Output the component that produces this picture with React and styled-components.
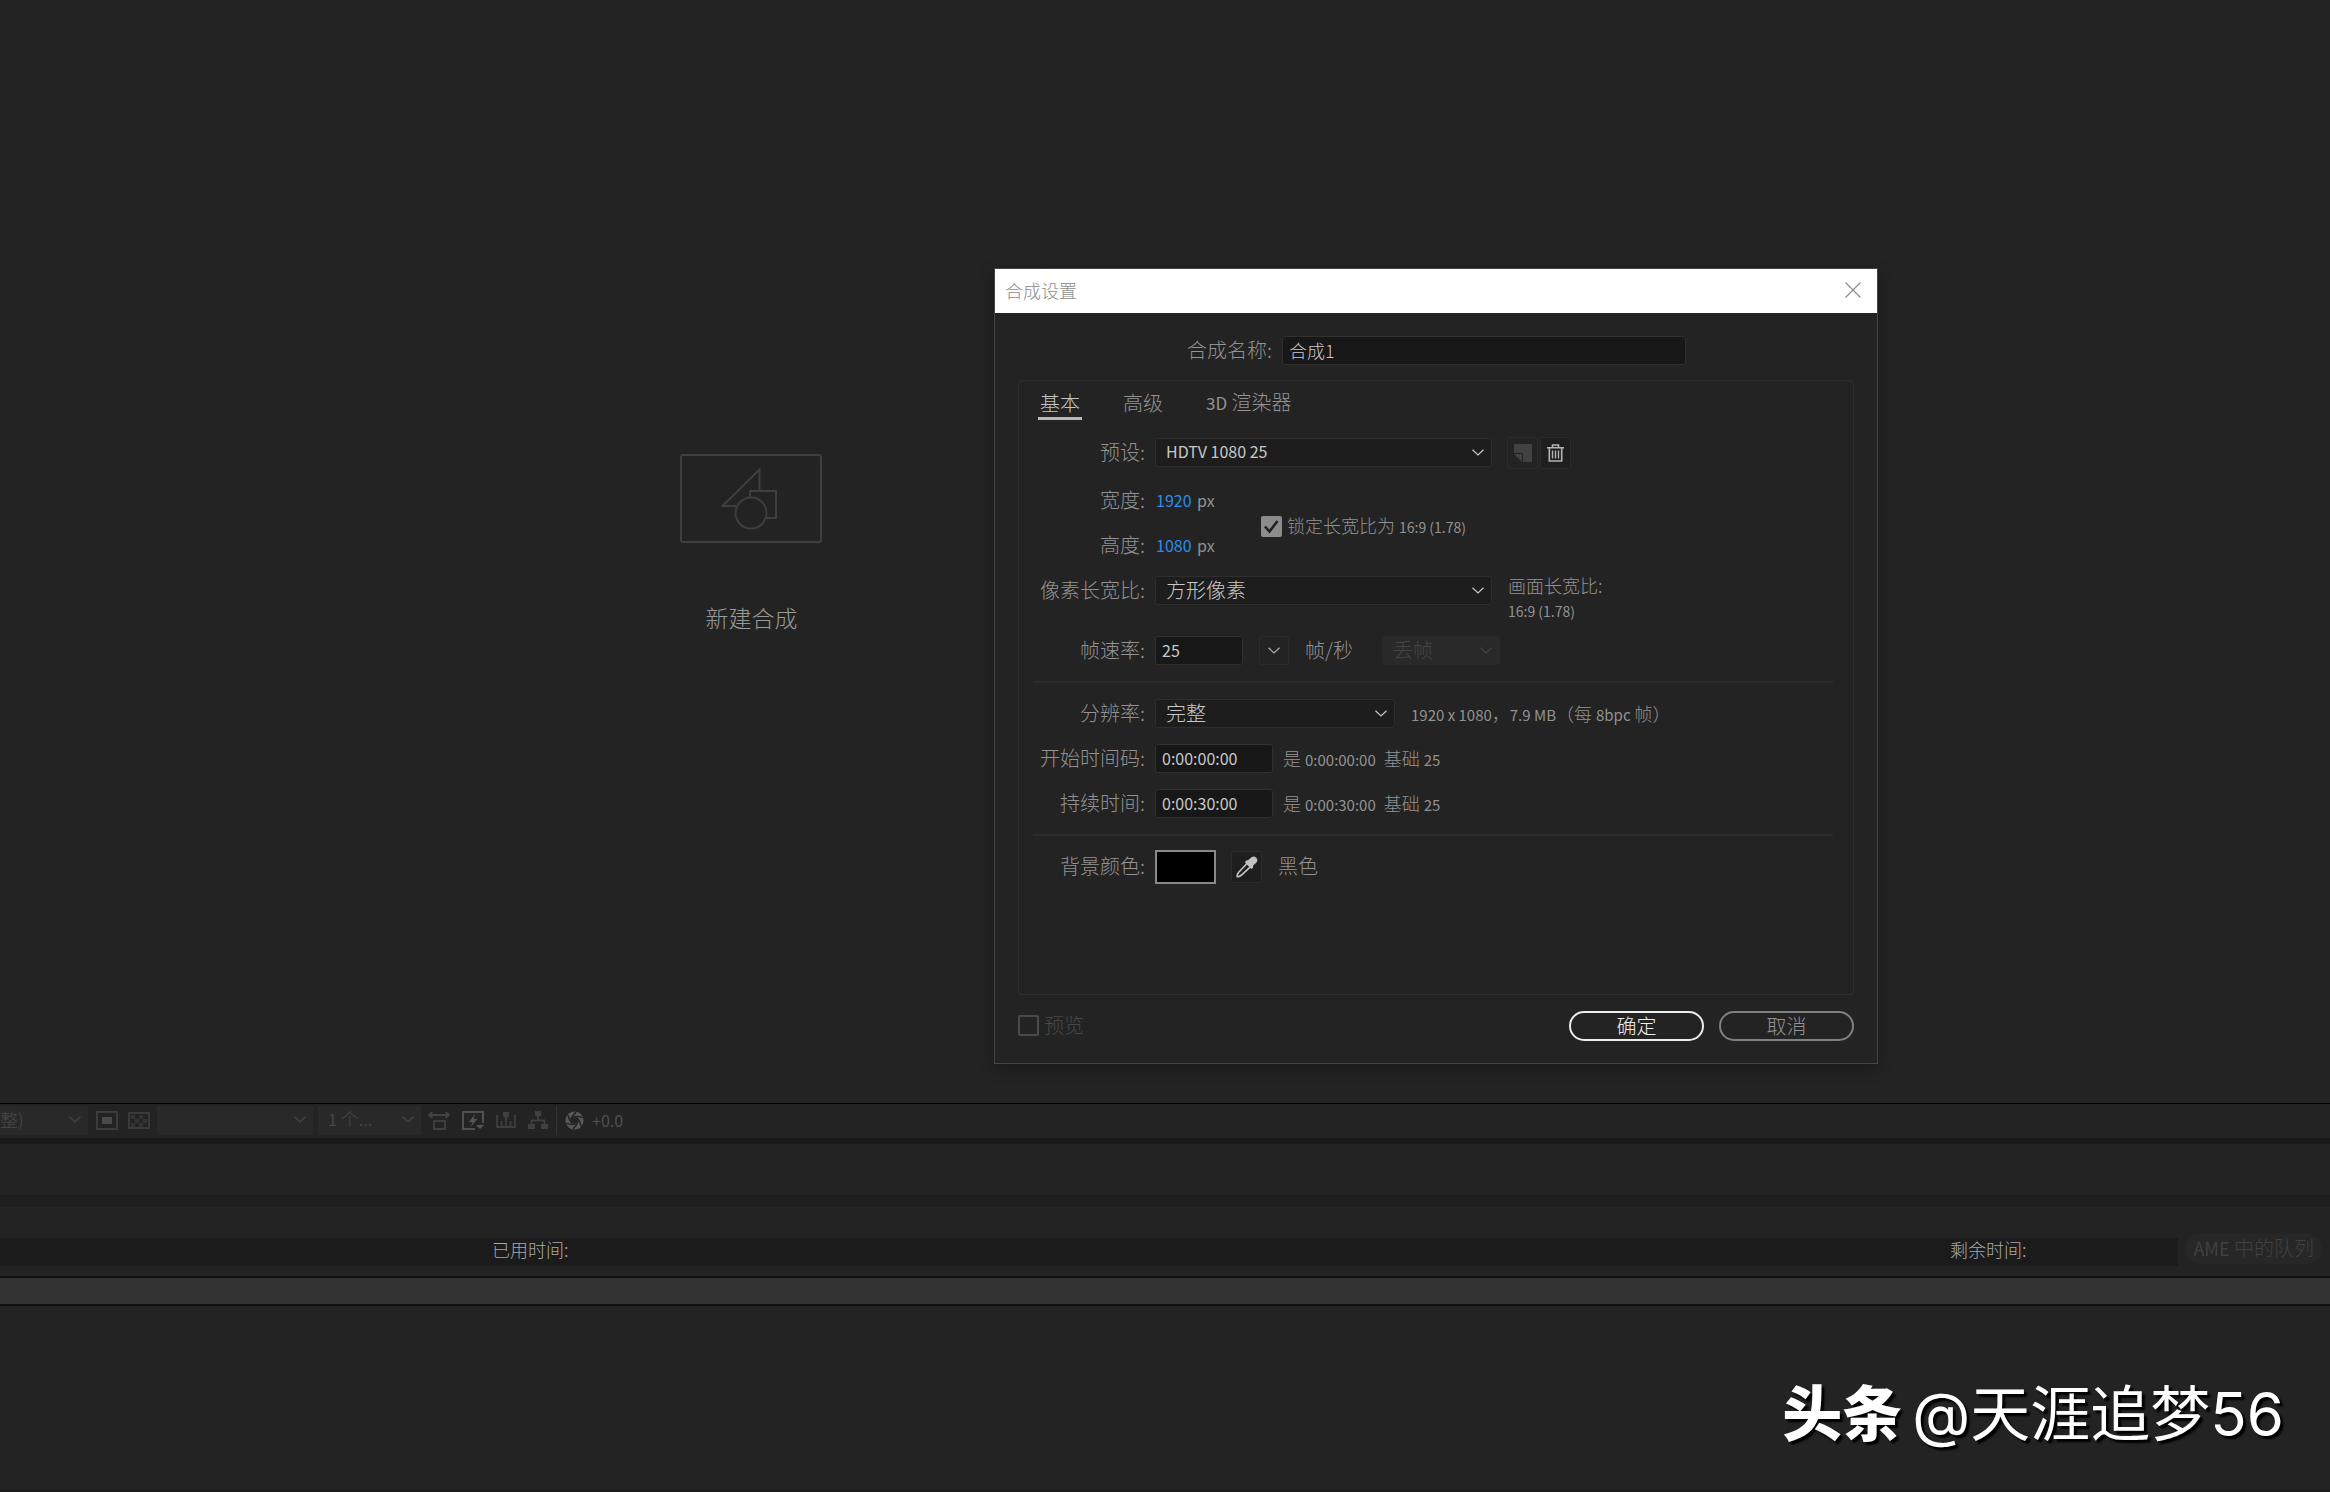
import React, { useState } from 'react';
import styled, { createGlobalStyle } from 'styled-components';

const Chevron = () => (
    <svg width="12" height="7" viewBox="0 0 12 7" fill="none" stroke="currentColor" strokeWidth="1.200">
        <path d="M.5 .8L6 6L11.500 .8" />
    </svg>
);

const ShapesIcon = () => (
    <svg width="56" height="62" viewBox="0 0 56 62" fill="none" stroke="#3f3f3f" strokeWidth="2">
        <path d="M15 38H1.500L38.500 1.500V23" />
        <path d="M29 29V23H55V50H45" />
        <circle cx="30" cy="45" r="15.500" />
    </svg>
);

const CloseIcon = () => (
    <svg width="16" height="16" viewBox="0 0 16 16" stroke="#8a8a8a" strokeWidth="1.100">
        <path d="M.5 .5l15 15M15.500 .5l-15 15" />
    </svg>
);

const SavePresetIcon = () => (
    <svg width="18" height="18" viewBox="0 0 18 18">
        <path d="M0 0H18V18H9V9H0Z" fill="#424242" />
        <path d="M0 10H8V18Z" fill="#424242" />
    </svg>
);

const TrashIcon = () => (
    <svg width="17" height="18" viewBox="0 0 17 18" fill="none" stroke="#b4b4b4" strokeWidth="1.600">
        <path d="M0 3.800H17M5.500 3.500V1H11.500V3.500M2.300 4V17H14.700V4" />
        <path d="M5.500 6.500V14.500M8.500 6.500V14.500M11.500 6.500V14.500" strokeWidth="1.400" />
    </svg>
);

const PipetteIcon = () => (
    <svg width="22" height="22" viewBox="0 0 22 22">
        <path d="M11 7.500L2.500 16.500Q.8 19 1.300 20.700Q3.200 21 5.500 19L14.300 10.800" fill="none" stroke="#c0c0c0" strokeWidth="1.700" />
        <path d="M10 4.500L12 4.200L15.500 1.200Q18 -.5 20.300 1.700Q22.300 4 20.500 6.500L17.200 9.500L17 12L15.200 13L9 6.500Z" fill="#c0c0c0" />
    </svg>
);

const CheckIcon = () => (
    <svg width="21" height="21" viewBox="0 0 21 21" fill="none" stroke="#202020" strokeWidth="2.600">
        <path d="M4 10.500l4.500 5L16.500 5" />
    </svg>
);

const RegionIcon = () => (
    <svg width="22" height="19" viewBox="0 0 22 19">
        <rect x="1" y="1" width="20" height="17" fill="none" stroke="#3c3c3c" strokeWidth="2" />
        <rect x="6" y="6" width="10" height="7" fill="#4a4a4a" />
    </svg>
);

const GridIcon = () => (
    <svg width="22" height="17" viewBox="0 0 22 17">
        <rect x="1" y="1" width="20" height="15" fill="none" stroke="#3a3a3a" strokeWidth="2" />
        <path d="M3 3h4v4H3zM11 3h4v4h-4zM7 7h4v4H7zM15 7h4v4h-4zM3 11h4v4H3zM11 11h4v4h-4z" fill="#333" />
    </svg>
);

const PixelAspectIcon = () => (
    <svg width="22" height="19" viewBox="0 0 22 19" fill="none" stroke="#434343" strokeWidth="1.800">
        <path d="M2 4H20M4.500 1L1 4L4.500 7M17.500 1L21 4L17.500 7" />
        <rect x="6" y="10" width="11" height="8" />
    </svg>
);

const PreviewIcon = () => (
    <svg width="22" height="19" viewBox="0 0 22 19">
        <path d="M13 18H1V1H21V12" fill="none" stroke="#505050" strokeWidth="2" />
        <path d="M13 3L7 11H10.500L8.500 16L15.500 8H11.500Z" fill="#565656" />
        <path d="M14 14H22L18 18Z" fill="#565656" />
    </svg>
);

const TimelineIcon = () => (
    <svg width="20" height="16" viewBox="0 0 20 16" fill="none" stroke="#3f3f3f" strokeWidth="1.800">
        <path d="M1 3V15H19V3M5.500 9V15M14.500 9V15M10 4V15" />
        <path d="M7 0H13V4L10 7L7 4Z" fill="#3f3f3f" stroke="none" />
    </svg>
);

const FlowIcon = () => (
    <svg width="20" height="18" viewBox="0 0 20 18" fill="#404040">
        <path d="M7 0H13V5H7zM0 13H7V18H0zM13 13H20V18H13z" />
        <path d="M10 5V10M3.500 13V9.500H16.500V13" fill="none" stroke="#404040" strokeWidth="1.800" />
    </svg>
);

const ApertureIcon = () => (
    <svg width="19" height="19" viewBox="0 0 20 20">
        <circle cx="10" cy="10" r="6.500" fill="none" stroke="#5a5a5a" strokeWidth="6" />
        <g fill="none" stroke="#232323" strokeWidth="1.500">
            {[0, 60, 120, 180, 240, 300].map(a => (
                <path key={a} d="M8.500 6.500Q13 5 18.500 7" transform={`rotate(${a} 10 10)`} />
            ))}
        </g>
    </svg>
);

function Dropdown({ id, label, options, ...rest }) {
    return (
        <SelectWrap {...rest}>
            <select id={id} aria-label={label} disabled={rest.$disabled}>
                {options.map(o => <option key={o}>{o}</option>)}
            </select>
            <Chevron />
        </SelectWrap>
    );
}

function TimeRow({ id, label, value }) {
    return (
        <Row>
            <Label htmlFor={id}>{label}</Label>
            <TextInput id={id} $width={118} defaultValue={value} />
            <Info>是 <Latin>{value}</Latin>&nbsp; 基础 <Latin>25</Latin></Info>
        </Row>
    );
}

function CompositionDialog() {
    const [locked, setLocked] = useState(true);

    return (
        <Dialog role="dialog" aria-label="合成设置">
            <TitleBar>
                <h1>合成设置</h1>
                <button type="button" aria-label="关闭"><CloseIcon /></button>
            </TitleBar>
            <DialogBody>
                <Row>
                    <Label htmlFor="name" $width={254}>合成名称:</Label>
                    <TextInput id="name" $width={404} $cjk defaultValue="合成1" />
                </Row>

                <Panel>
                    <Tabs role="tablist">
                        <Tab role="tab" aria-selected="true" $active>基本</Tab>
                        <Tab role="tab" aria-selected="false">高级</Tab>
                        <Tab role="tab" aria-selected="false"><Latin $size={17}>3D</Latin> 渲染器</Tab>
                    </Tabs>

                    <Row $after={3}>
                        <Label htmlFor="preset">预设:</Label>
                        <Dropdown id="preset" $width={337} $latin options={['HDTV 1080 25']} />
                        <ButtonPair>
                            <ToolButton disabled aria-label="保存预设"><SavePresetIcon /></ToolButton>
                            <ToolButton $dark aria-label="删除预设"><TrashIcon /></ToolButton>
                        </ButtonPair>
                    </Row>

                    <SizeBlock>
                        <div>
                            <Row>
                                <Label as="span">宽度:</Label>
                                <SizeValue><a href="#width">1920</a> px</SizeValue>
                            </Row>
                            <Row>
                                <Label as="span">高度:</Label>
                                <SizeValue><a href="#height">1080</a> px</SizeValue>
                            </Row>
                        </div>
                        <CheckLabel $small>
                            <CheckBox>
                                <input type="checkbox" checked={locked} onChange={() => setLocked(!locked)} />
                                {locked && <CheckIcon />}
                            </CheckBox>
                            <span>锁定长宽比为 <Latin $size={14}>16:9 (1.78)</Latin></span>
                        </CheckLabel>
                    </SizeBlock>

                    <Row $after={15}>
                        <Label htmlFor="par">像素长宽比:</Label>
                        <Dropdown id="par" $width={337} options={['方形像素']} />
                        <FrameAspect>
                            画面长宽比:<br />
                            <Latin $size={14}>16:9 (1.78)</Latin>
                        </FrameAspect>
                    </Row>

                    <Row>
                        <Label htmlFor="fps">帧速率:</Label>
                        <TextInput id="fps" $width={88} defaultValue="25" />
                        <RateButton aria-label="选择帧速率"><Chevron /></RateButton>
                        <Unit>帧/秒</Unit>
                        <Dropdown label="丢帧" $width={118} $disabled options={['丢帧']} />
                    </Row>

                    <Divider />

                    <Row>
                        <Label htmlFor="res">分辨率:</Label>
                        <Dropdown id="res" $width={240} options={['完整']} />
                        <Info $wide>
                            <Latin>1920 x 1080</Latin>，<Latin>7.9 MB</Latin>（每 <Latin>8bpc</Latin> 帧）
                        </Info>
                    </Row>
                    <TimeRow id="start" label="开始时间码:" value="0:00:00:00" />
                    <TimeRow id="duration" label="持续时间:" value="0:00:30:00" />

                    <Divider />

                    <Row>
                        <Label as="span">背景颜色:</Label>
                        <Swatch aria-label="背景颜色" />
                        <PipetteButton $dark aria-label="吸管"><PipetteIcon /></PipetteButton>
                        <Unit>黑色</Unit>
                    </Row>
                </Panel>

                <DialogFooter>
                    <CheckLabel $muted>
                        <CheckBox><input type="checkbox" disabled /></CheckBox>
                        <span>预览</span>
                    </CheckLabel>
                    <Actions>
                        <PillButton $primary>确定</PillButton>
                        <PillButton>取消</PillButton>
                    </Actions>
                </DialogFooter>
            </DialogBody>
        </Dialog>
    );
}

export default function App() {
    return (
        <>
            <GlobalStyle />
            <Page>
                <Stage>
                    <Viewer>
                        <NewComp>
                            <Frame><ShapesIcon /></Frame>
                            <span>新建合成</span>
                        </NewComp>
                    </Viewer>
                </Stage>

                <ViewerBar>
                    <BarGroup>
                        <FirstMenu $width={88}><span>整)</span><Chevron /></FirstMenu>
                        <RegionIcon />
                        <GridIcon />
                    </BarGroup>
                    <BarMenu $width={156} aria-label="视图"><span /><Chevron /></BarMenu>
                    <BarMenu $width={103}><span><Latin $size={16}>1</Latin> 个...</span><Chevron /></BarMenu>
                    <BarIcons>
                        <PixelAspectIcon />
                        <PreviewIcon />
                        <TimelineIcon />
                        <FlowIcon />
                    </BarIcons>
                    <Exposure><ApertureIcon />+0.0</Exposure>
                </ViewerBar>

                <QueueTabs />
                <QueueHeader />
                <QueueRow>
                    <QueueTimes>
                        <span>已用时间:</span>
                        <span>剩余时间:</span>
                    </QueueTimes>
                    <QueueButton disabled><Latin $size={18}>AME</Latin> 中的队列</QueueButton>
                </QueueRow>
                <ColumnBar />
                <QueueList />

                <CompositionDialog />
                <Watermark><b>头条</b>@天涯追梦56</Watermark>
            </Page>
        </>
    );
}

const GlobalStyle = createGlobalStyle`
*{
    box-sizing:border-box;
}

body{
    margin:0;
    background:#232323;
    color:#929292;
    font-family:"Noto Sans CJK SC", "Noto Sans", sans-serif;
    font-size:20px;
    font-weight:300;
}

button, input, select{
    margin:0;
    padding:0;
    font:inherit;
    color:inherit;
}

svg{
    display:block;
    flex:none;
}
`

const Page = styled.div`
position:relative;
display:flex;
flex-direction:column;
min-height:100vh;
overflow:hidden;
`

const Stage = styled.main`
flex:1;
display:flex;
border-bottom:1px solid #000;
`

const Viewer = styled.section`
width:64.5%;
display:flex;
align-items:center;
justify-content:center;
`

const NewComp = styled.button`
display:flex;
flex-direction:column;
align-items:center;
gap:44px;
padding-bottom:2px;
border:0;
background:transparent;
color:#999;
font-size:23px;
line-height:60px;
`

const Frame = styled.div`
display:flex;
align-items:center;
justify-content:center;
width:142px;
height:89px;
padding-right:4px;
border:2px solid #3f3f3f;
border-radius:3px;
`

const ViewerBar = styled.div`
display:flex;
align-items:center;
height:34px;
padding-bottom:2px;
color:#484848;
white-space:nowrap;
`

const BarGroup = styled.div`
display:flex;
align-items:center;
gap:10px;
margin-right:7px;
`

const BarMenu = styled.button`
display:flex;
align-items:center;
justify-content:space-between;
width:${props => props.$width}px;
height:29px;
margin-right:5px;
padding:0 7px 2px 10px;
border:0;
background:#292929;
font-size:18px;
line-height:27px;
`

const FirstMenu = styled(BarMenu)`
margin-right:-2px;
padding-left:0;
`

const BarIcons = styled.div`
display:flex;
align-items:center;
gap:12px;
padding:0 8px 0 2px;
`

const Exposure = styled.div`
display:flex;
align-items:center;
gap:8px;
height:29px;
padding-left:8px;
border-left:1px solid #333;
font-size:16px;
font-weight:400;
color:#505050;
`

const QueueTabs = styled.div`
height:57px;
border-top:6px solid #191919;
`

const QueueHeader = styled.div`
height:43px;
border-top:12px solid #1e1e1e;
`

const QueueRow = styled.div`
display:flex;
justify-content:space-between;
height:38px;
padding-right:8px;
`

const QueueTimes = styled.div`
flex:1;
display:flex;
justify-content:space-between;
height:28px;
margin-right:7px;
padding:0 152px 0 492px;
background:#1b1b1b;
color:#a8a8a8;
font-size:18px;
line-height:22px;
`

const QueueButton = styled.button`
height:30px;
margin-top:-4px;
padding:0 8px 2px;
border:0;
border-radius:15px;
background:#272727;
color:#414141;
line-height:28px;
`

const ColumnBar = styled.div`
height:30px;
background:#333;
border-top:2px solid #101010;
border-bottom:2px solid #101010;
`

const QueueList = styled.div`
height:186px;
border-bottom:2px solid #1b1b1b;
`

const Dialog = styled.div`
position:absolute;
top:268px;
left:994px;
width:884px;
border:1px solid #444;
background:#232323;
box-shadow:0 4px 14px rgba(0,0,0,0.3);
`

const TitleBar = styled.header`
display:flex;
align-items:center;
justify-content:space-between;
height:44px;
padding:0 16px 2px 10px;
background:#fff;

h1{
    margin:0;
    color:#8c8c8c;
    font-size:18px;
    font-weight:300;
}

button{
    border:0;
    background:transparent;
}
`

const DialogBody = styled.form`
padding:15px 23px 22px;
`

const Panel = styled.section`
min-height:615px;
margin-top:7px;
border:1px solid #2f2f2f;
border-radius:4px;
`

const Tabs = styled.div`
display:flex;
gap:39px;
margin-bottom:10px;
padding-left:19px;
`

const Tab = styled.button.attrs({ type: 'button' })`
height:39px;
padding:7px 2px 0;
border:0;
border-bottom:3px solid ${props => props.$active ? "#b8b8b8" : "transparent"};
background:transparent;
color:${props => props.$active ? "#c4c4c4" : "#929292"};
line-height:28px;
`

const Row = styled.div`
display:flex;
align-items:center;
height:45px;
margin-bottom:${props => props.$after || 0}px;
white-space:nowrap;
`

const Label = styled.label`
width:${props => props.$width || 126}px;
margin-right:10px;
padding-bottom:2px;
text-align:right;
`

const TextInput = styled.input`
width:${props => props.$width}px;
height:29px;
padding:0 6px 2px;
border:1px solid #303030;
border-radius:3px;
background:#171717;
color:#c8c8c8;
font-size:${props => props.$cjk ? 18 : 16}px;
font-weight:${props => props.$cjk ? 300 : 400};
`

const SelectWrap = styled.div`
position:relative;
display:flex;
color:${props => props.$disabled ? "#454545" : "#c8c8c8"};

select{
    appearance:none;
    width:${props => props.$width}px;
    height:29px;
    padding:0 30px 2px 10px;
    border:1px solid ${props => props.$disabled ? "#292929" : "#2e2e2e"};
    border-radius:3px;
    background:${props => props.$disabled ? "#292929" : "#1d1d1d"};
    font-size:${props => props.$latin ? 16 : 20}px;
    font-weight:${props => props.$latin ? 400 : 300};
    line-height:25px;
    opacity:1;
}

svg{
    position:absolute;
    top:11px;
    right:8px;
    pointer-events:none;
}
`

const ButtonPair = styled.div`
display:flex;
gap:2px;
margin-left:15px;
`

const ToolButton = styled.button.attrs({ type: 'button' })`
display:flex;
align-items:center;
justify-content:center;
width:31px;
height:32px;
border:1px solid #2c2c2c;
border-radius:3px;
background:${props => props.$dark ? "#1e1e1e" : "transparent"};
`

const RateButton = styled(ToolButton)`
width:30px;
height:29px;
margin-left:16px;
color:#b0b0b0;
`

const PipetteButton = styled(ToolButton)`
margin-left:15px;
`

const Unit = styled.span`
min-width:77px;
margin-left:16px;
padding-bottom:2px;
`

const SizeBlock = styled.div`
display:flex;
align-items:center;
`

const SizeValue = styled.span`
width:106px;
padding:0 0 2px 1px;
font-size:16px;
font-weight:400;

a{
    margin-right:2px;
    color:#2d8ceb;
    text-decoration:none;
}
`

const CheckLabel = styled.label`
display:flex;
align-items:center;
gap:5px;
padding-top:${props => props.$small ? 6 : 0}px;
font-size:${props => props.$small ? 18 : 20}px;
color:${props => props.$muted ? "#484848" : "inherit"};

> span:last-child{
    padding-bottom:2px;
}
`

const CheckBox = styled.span`
position:relative;
display:flex;

input{
    appearance:none;
    width:21px;
    height:21px;
    border:2px solid #4a4a4a;
    border-radius:2px;
}

input:checked{
    border-color:#8c8c8c;
    background:#8c8c8c;
}

svg{
    position:absolute;
    top:0;
    left:0;
    pointer-events:none;
}
`

const Latin = styled.span`
font-size:${props => props.$size || 15}px;
font-weight:400;
`

const FrameAspect = styled.div`
align-self:flex-start;
margin-left:16px;
padding-top:5px;
font-size:18px;
line-height:24px;
`

const Info = styled.span`
margin-left:${props => props.$wide ? 16 : 10}px;
padding-bottom:2px;
font-size:18px;
`

const Divider = styled.hr`
height:2px;
margin:8px 20px 8px 14px;
border:0;
background:#2d2d2d;
`

const Swatch = styled.button.attrs({ type: 'button' })`
width:61px;
height:34px;
border:2px solid #8a8a8a;
background:#000;
`

const DialogFooter = styled.footer`
display:flex;
align-items:center;
justify-content:space-between;
margin-top:15px;
`

const Actions = styled.div`
display:flex;
gap:15px;
`

const PillButton = styled.button.attrs({ type: 'button' })`
width:135px;
height:30px;
border:2px solid ${props => props.$primary ? "#ececec" : "#808080"};
border-radius:15px;
background:transparent;
color:${props => props.$primary ? "#ececec" : "#929292"};
line-height:26px;
`

const Watermark = styled.div`
position:absolute;
right:46px;
bottom:34px;
color:#fff;
font-family:Inter, "Noto Sans CJK SC", sans-serif;
font-size:60px;
font-weight:400;
line-height:88px;
text-shadow:3px 3px 2px #000;
white-space:nowrap;

b{
    margin-right:10px;
    font-weight:900;
}
`
